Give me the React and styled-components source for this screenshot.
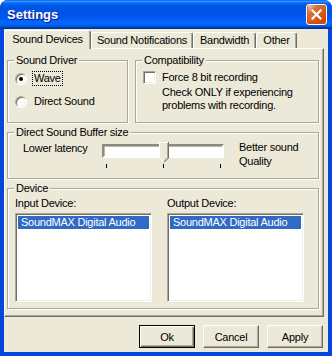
import React from 'react';
import styled, { createGlobalStyle } from 'styled-components';

const GlobalStyle = createGlobalStyle`
  *, *::before, *::after {
    box-sizing: border-box;
  }
  html, body {
    margin: 0;
    padding: 0;
    background: #ffffff;
  }
`;

const Window = styled.div`
  width: 332px;
  height: 356px;
  display: flex;
  flex-direction: column;
  background: #0646dd;
  border-radius: 8px 8px 0 0;
  overflow: hidden;
  font-family: "Liberation Sans", Arial, sans-serif;
  font-size: 11px;
  letter-spacing: -0.25px;
  color: #000;
`;

const TitleBar = styled.div`
  height: 29px;
  flex: none;
  display: flex;
  align-items: center;
  justify-content: space-between;
  padding: 0 5px 0 7px;
  background: linear-gradient(
    180deg,
    #0058ee 0%,
    #3593ff 4%,
    #288eff 6%,
    #127dff 8%,
    #036ffc 10%,
    #0262ee 14%,
    #0057e5 20%,
    #0054e3 24%,
    #0055eb 56%,
    #005bf5 66%,
    #026afe 76%,
    #0062ef 86%,
    #0052d6 92%,
    #0040ab 94%,
    #003092 100%
  );
`;

const Title = styled.span`
  color: #fff;
  font-weight: bold;
  font-size: 13px;
  letter-spacing: 0;
  text-shadow: 1px 1px #0f1089;
`;

const CloseButton = styled.div`
  width: 21px;
  height: 21px;
  display: flex;
  align-items: center;
  justify-content: center;
  border: 1px solid #fff;
  border-radius: 3px;
  background: radial-gradient(circle at 90% 90%, #cc4600 0%, #dc6527 55%, #cd7546 70%, #ffccb2 90%, #fff 100%);
  box-shadow: inset 0 -1px 2px 1px #da4600;
`;

const Body = styled.div`
  flex: 1;
  margin: 0 4px 4px;
  padding-top: 1px;
  background: #ece9d8;
  display: flex;
  flex-direction: column;
`;

const TabStrip = styled.div`
  height: 19px;
  display: flex;
  align-items: flex-end;
  margin-bottom: -1px;
  position: relative;
  z-index: 1;
`;

const Tab = styled.div`
  width: ${p => p.$w}px;
  height: ${p => (p.$active ? 19 : 16)}px;
  margin-bottom: ${p => (p.$active ? 0 : 1)}px;
  padding-top: ${p => (p.$active ? 2 : 1)}px;
  background: #ece9d8;
  border: 1px solid;
  border-bottom: none;
  border-color: #fff #716f64 transparent #fff;
  border-radius: 3px 3px 0 0;
  box-shadow: inset -1px 0 #aca899;
  text-align: center;
  line-height: 13px;
  white-space: nowrap;
`;

const Panel = styled.div`
  width: 320px;
  height: 269px;
  border: 1px solid;
  border-color: #fff #716f64 #716f64 #fff;
  box-shadow: inset -1px -1px #aca899;
  padding: 11px 0 0 2px;
  display: flex;
  flex-direction: column;
  gap: 9px;
`;

const Row = styled.div`
  display: flex;
  gap: 7px;
`;

const Group = styled.div`
  position: relative;
  width: ${p => p.$w}px;
  height: ${p => p.$h}px;
  border: 1px solid #aca899;
  box-shadow: 1px 1px 0 #fff, inset 1px 1px 0 #fff;
  padding: ${p => p.$pad || '10px 0 0 7px'};
`;

const GroupLabel = styled.span`
  position: absolute;
  top: -7px;
  left: 6px;
  padding: 0 2px;
  line-height: 13px;
  background: #ece9d8;
`;

const RadioRow = styled.div`
  display: flex;
  align-items: center;
  gap: 5px;
  height: 15px;
  margin-bottom: 8px;
`;

const Radio = styled.span`
  position: relative;
  width: 12px;
  height: 12px;
  border-radius: 50%;
  border: 1px solid;
  border-color: #aca899 #fff #fff #aca899;
  background: #fff;
  box-shadow: inset 1px 1px #716f64, inset -1px -1px #f1efe2;
  flex: none;

  &::after {
    content: '';
    display: ${p => (p.$checked ? 'block' : 'none')};
    position: absolute;
    left: 3px;
    top: 3px;
    width: 4px;
    height: 4px;
    border-radius: 50%;
    background: #000;
  }
`;

const ChoiceText = styled.span`
  line-height: 13px;
  padding: 0 1px;
  border: 1px ${p => (p.$focus ? 'dotted #000' : 'solid transparent')};
`;

const CheckRow = styled.div`
  display: flex;
  align-items: flex-start;
  gap: 6px;
  line-height: 13px;
`;

const CheckBox = styled.span`
  width: 13px;
  height: 13px;
  flex: none;
  border: 1px solid;
  border-color: #aca899 #fff #fff #aca899;
  background: #fff;
  box-shadow: inset 1px 1px #716f64, inset -1px -1px #f1efe2;
`;

const Note = styled.div`
  margin: 2px 0 0 19px;
  line-height: 13px;
`;

const SliderRow = styled.div`
  display: flex;
  align-items: flex-start;
`;

const SideLabel = styled.div`
  width: ${p => p.$w}px;
  line-height: ${p => p.$lh || 13}px;
  margin-top: ${p => p.$mt || 0}px;
  flex: none;
`;

const Slider = styled.div`
  position: relative;
  width: 122px;
  margin: 3px 15px 0 0;
  flex: none;
`;

const Track = styled.div`
  height: 14px;
  border: 2px solid;
  border-color: #8d8b80 #fff #fff #8d8b80;
  background: #fff;
  box-shadow: inset 1px 1px #b9b6a8;
`;

const Thumb = styled.svg`
  position: absolute;
  left: 57px;
  top: -2px;
`;

const Ticks = styled.div`
  display: flex;
  justify-content: space-between;
  padding: 0 3px 0 4px;
  margin-top: 6px;
`;

const Tick = styled.span`
  width: 1px;
  height: 4px;
  background: #000;
`;

const Columns = styled.div`
  display: flex;
  gap: 15px;
`;

const Column = styled.div`
  width: 137px;
  display: flex;
  flex-direction: column;
`;

const ColumnLabel = styled.div`
  line-height: 13px;
  margin-bottom: 3px;
`;

const ListBox = styled.div`
  height: 89px;
  border: 1px solid;
  border-color: #aca899 #fff #fff #aca899;
  box-shadow: inset 1px 1px #716f64, inset -1px -1px #f1efe2;
  background: #fff;
  padding: 2px;
`;

const ListItem = styled.div`
  height: 13px;
  line-height: 13px;
  padding-left: 3px;
  white-space: nowrap;
  overflow: hidden;
  background: ${p => (p.$selected ? '#316ac5' : 'transparent')};
  color: ${p => (p.$selected ? '#fff' : '#000')};
`;

const ButtonRow = styled.div`
  display: flex;
  justify-content: flex-end;
  gap: 8px;
  margin-top: 8px;
  padding-right: 5px;
`;

const Button = styled.div`
  width: 56px;
  height: 23px;
  display: flex;
  align-items: center;
  justify-content: center;
  background: #ece9d8;
  border: 1px solid;
  border-color: ${p => (p.$default ? '#000' : '#fff #716f64 #716f64 #fff')};
  box-shadow: ${p =>
    p.$default
      ? 'inset 1px 1px #fff, inset -1px -1px #716f64, inset -2px -2px #aca899'
      : 'inset -1px -1px #aca899'};
`;

const tabs = [
  { label: 'Sound Devices', w: 87, active: true },
  { label: 'Sound Notifications', w: 102 },
  { label: 'Bandwidth', w: 63 },
  { label: 'Other', w: 41 },
];

const devices = ['SoundMAX Digital Audio'];

const App = () => {
  return (
    <Window>
      <GlobalStyle />
      <TitleBar>
        <Title>Settings</Title>
        <CloseButton>
          <svg width="11" height="11" viewBox="0 0 11 11">
            <path d="M1.5 1.5 L9.5 9.5 M9.5 1.5 L1.5 9.5" stroke="#fff" strokeWidth="2.2" strokeLinecap="square" />
          </svg>
        </CloseButton>
      </TitleBar>
      <Body>
        <TabStrip>
          {tabs.map(t => (
            <Tab key={t.label} $w={t.w} $active={t.active}>
              {t.label}
            </Tab>
          ))}
        </TabStrip>
        <Panel>
          <Row>
            <Group $w={121} $h={63}>
              <GroupLabel>Sound Driver</GroupLabel>
              <RadioRow>
                <Radio $checked />
                <ChoiceText $focus>Wave</ChoiceText>
              </RadioRow>
              <RadioRow>
                <Radio />
                <ChoiceText>Direct Sound</ChoiceText>
              </RadioRow>
            </Group>
            <Group $w={184} $h={63}>
              <GroupLabel>Compatibility</GroupLabel>
              <CheckRow>
                <CheckBox />
                <span>Force 8 bit recording</span>
              </CheckRow>
              <Note>
                Check ONLY if experiencing
                <br />
                problems with recording.
              </Note>
            </Group>
          </Row>
          <Group $w={312} $h={47} $pad="8px 0 0 15px">
            <GroupLabel>Direct Sound Buffer size</GroupLabel>
            <SliderRow>
              <SideLabel $w={79} $mt={1}>Lower latency</SideLabel>
              <Slider>
                <Track />
                <Thumb width="10" height="21" viewBox="0 0 10 21">
                  <path d="M0.5 0.5 H9.5 V16 L5 20.5 L0.5 16 Z" fill="#ece9d8" />
                  <path d="M0.5 16 V0.5 H9" fill="none" stroke="#fff" />
                  <path d="M9.5 0 V16 L5 20.5" fill="none" stroke="#716f64" />
                  <path d="M8.5 1 V15.5 L5 19" fill="none" stroke="#aca899" />
                  <path d="M0.5 16 L4.5 20" fill="none" stroke="#fff" />
                </Thumb>
                <Ticks>
                  <Tick />
                  <Tick />
                  <Tick />
                </Ticks>
              </Slider>
              <SideLabel $w={70} $lh={14} $mt={-1}>
                Better sound
                <br />
                Quality
              </SideLabel>
            </SliderRow>
          </Group>
          <Group $w={312} $h={121} $pad="8px 0 0 7px">
            <GroupLabel>Device</GroupLabel>
            <Columns>
              <Column>
                <ColumnLabel>Input Device:</ColumnLabel>
                <ListBox>
                  {devices.map(d => (
                    <ListItem key={d} $selected>{d}</ListItem>
                  ))}
                </ListBox>
              </Column>
              <Column>
                <ColumnLabel>Output Device:</ColumnLabel>
                <ListBox>
                  {devices.map(d => (
                    <ListItem key={d} $selected>{d}</ListItem>
                  ))}
                </ListBox>
              </Column>
            </Columns>
          </Group>
        </Panel>
        <ButtonRow>
          <Button $default>Ok</Button>
          <Button>Cancel</Button>
          <Button>Apply</Button>
        </ButtonRow>
      </Body>
    </Window>
  );
};

export default App;
